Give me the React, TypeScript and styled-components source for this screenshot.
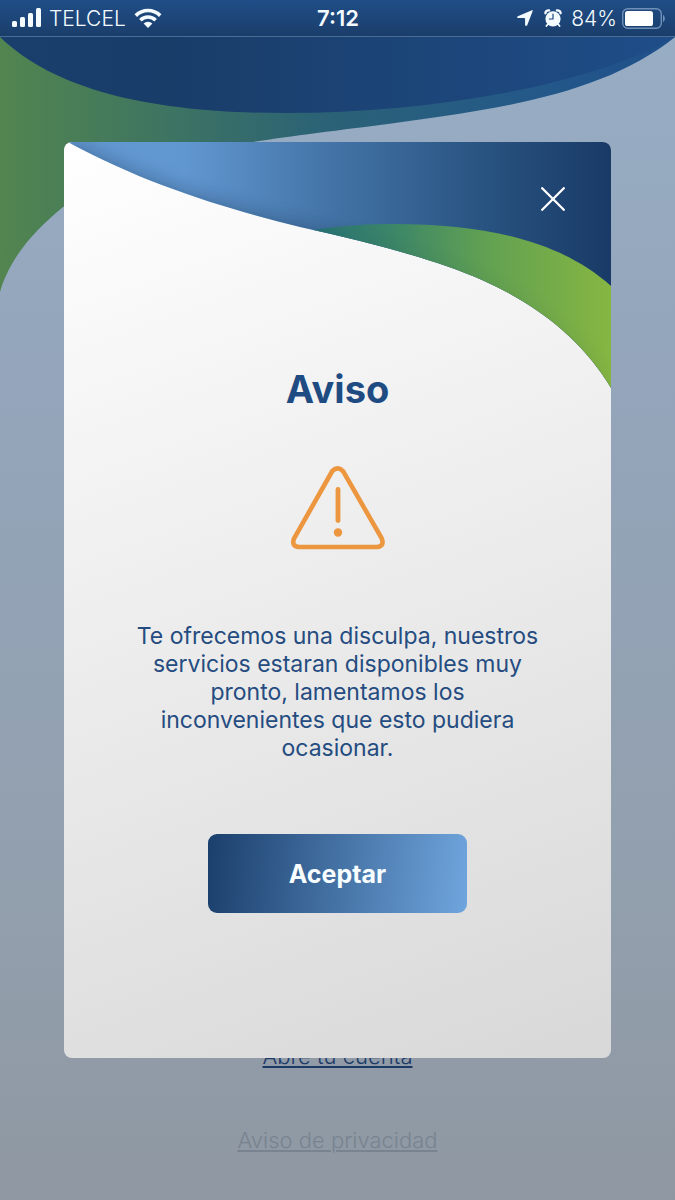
import React from "react";
import styled, { createGlobalStyle } from "styled-components";

const GlobalStyle = createGlobalStyle`
  *, *::before, *::after { box-sizing: border-box; }
  body { margin: 0; font-family: Inter, "Liberation Sans", sans-serif; }
`;

const Screen = styled.div`
  position: relative;
  display: flex;
  flex-direction: column;
  min-height: 100vh;
  background: linear-gradient(180deg, #98aec5 0%, #94a6bc 28%, #929fad 75%, #8f98a2 100%);
`;

const StatusBar = styled.header`
  display: grid;
  grid-template-columns: 1fr auto 1fr;
  align-items: center;
  height: 37px;
  padding: 0 10px 0 11px;
  color: #f4fbff;
  font-size: 22px;
  line-height: 36px;
  background: linear-gradient(180deg, #204d87 0%, #1a3e6b 100%);
  border-bottom: 1px solid #4a6d96;
`;

const StatusGroup = styled.div<{ $end?: boolean }>`
  display: flex;
  align-items: center;
  justify-content: ${(p) => (p.$end ? "flex-end" : "flex-start")};
  gap: ${(p) => (p.$end ? "5px" : "8px")};
`;

const StatusIcons = styled.div`
  display: flex;
  align-items: center;
  gap: 11px;
  padding-right: 4px;
`;

const StatusText = styled.span`
  padding-top: 2px;
  font-size: 21px;
  font-weight: 350;
  line-height: 34px;
`;

const Time = styled.time`
  font-weight: 600;
`;

const HeroWave = styled.svg`
  display: block;
  width: 100%;
  height: 255px;
`;

const FooterLinks = styled.nav`
  display: flex;
  flex-direction: column;
  align-items: center;
  gap: 56px;
  margin-top: auto;
  padding-bottom: 46px;
`;

const FooterLink = styled.a<{ $muted?: boolean }>`
  color: ${(p) => (p.$muted ? "#78838f" : "#1c3a68")};
  font-size: 22px;
  font-weight: 300;
  line-height: 28px;
  text-decoration: underline;
  text-decoration-thickness: 2px;
  text-underline-offset: 2px;
`;

const Overlay = styled.div`
  position: absolute;
  inset: 0;
  display: flex;
  align-items: center;
  justify-content: center;
  padding: 0 64px;
`;

const Dialog = styled.section`
  position: relative;
  display: flex;
  flex-direction: column;
  align-items: center;
  width: 100%;
  padding-bottom: 145px;
  overflow: hidden;
  border-radius: 8px;
  background: linear-gradient(160deg, #ffffff 0%, #d8d8d8 100%);
`;

const DialogWave = styled.svg`
  display: block;
  width: 100%;
  height: 247px;
  margin-bottom: -24px;
`;

const CloseButton = styled.button`
  position: absolute;
  top: 35px;
  right: 36px;
  display: grid;
  place-items: center;
  width: 44px;
  height: 44px;
  padding: 0;
  border: 0;
  background: none;
  cursor: pointer;
`;

const Title = styled.h1`
  margin: 0 0 52px;
  color: #1f4b83;
  font-size: 38px;
  font-weight: 700;
  line-height: 48px;
`;

const Message = styled.p`
  margin: 72px 0;
  padding: 0 64px;
  color: #254c80;
  font-size: 23px;
  line-height: 28px;
  text-align: center;
`;

const AcceptButton = styled.button`
  width: 259px;
  height: 79px;
  border: 0;
  border-radius: 9px;
  color: #f8fdff;
  font-family: inherit;
  font-size: 25px;
  font-weight: 650;
  background: linear-gradient(95deg, #1b3f6c 0%, #6fa5dd 100%);
  cursor: pointer;
`;

const SignalIcon = () => (
  <svg width="30" height="20" viewBox="0 0 30 20" fill="currentColor" aria-hidden="true">
    <rect x="1" y="13" width="5" height="6" rx="1.5" />
    <rect x="9" y="9" width="5" height="10" rx="1.5" />
    <rect x="17" y="5" width="5" height="14" rx="1.5" />
    <rect x="25" y="0" width="5" height="19" rx="1.5" />
  </svg>
);

const WifiIcon = () => (
  <svg width="28" height="20" viewBox="0 0 28 20" aria-hidden="true">
    <g fill="none" stroke="currentColor" strokeWidth="3.6">
      <path d="M1.8 7.6 A17.3 17.3 0 0 1 26.2 7.6" />
      <path d="M6.4 12.2 A10.8 10.8 0 0 1 21.6 12.2" />
    </g>
    <path d="M14 20 L9.6 15.6 A6.2 6.2 0 0 1 18.4 15.6 Z" fill="currentColor" />
  </svg>
);

const LocationIcon = () => (
  <svg width="16" height="16" viewBox="0 0 16 16" fill="currentColor" aria-hidden="true">
    <path d="M15 0.2 C15.7 0 16 0.4 15.7 1.1 L10.2 15.2 C9.8 16.2 8.1 16 8.1 15 V9 C8.1 8.4 7.8 8.1 7.2 8.1 H1 C0 8.1 -0.1 6.6 0.8 6.2 Z" />
  </svg>
);

const AlarmIcon = () => (
  <svg width="18" height="18" viewBox="0 0 18 18" aria-hidden="true">
    <circle cx="9" cy="9.8" r="7.6" fill="currentColor" />
    <g fill="none" stroke="currentColor" strokeLinecap="round">
      <path d="M1.4 4.2 A3 3 0 0 1 5 1.4" strokeWidth="2.4" />
      <path d="M16.6 4.2 A3 3 0 0 0 13 1.4" strokeWidth="2.4" />
      <path d="M4 15 L2.4 17 M14 15 L15.6 17" strokeWidth="1.8" />
    </g>
    <path d="M9 5.2 V10 H5.4" fill="none" stroke="#1d457a" strokeWidth="1.2" strokeLinecap="round" />
  </svg>
);

const BatteryIcon = () => (
  <svg width="43" height="21" viewBox="0 0 43 21" aria-hidden="true">
    <rect x="0.7" y="0.7" width="38.6" height="19.6" rx="5" fill="none" stroke="#7090b8" strokeWidth="1.4" />
    <rect x="3" y="3" width="28" height="15" rx="2.6" fill="#ffffff" />
    <path d="M41 7 C43.4 8 43.4 13 41 14 Z" fill="#7090b8" />
  </svg>
);

const WarningIcon = () => (
  <svg width="96" height="85" viewBox="0 0 96 85" fill="none" stroke="#ec963f" aria-hidden="true">
    <path
      d="M42.3 6 Q48 0.6 53.2 6.4 L91.6 73.2 Q94.8 81.2 87 82 H9 Q1.2 81.2 4 73.6 Z"
      strokeWidth="4.6"
      strokeLinejoin="round"
    />
    <path d="M48 24.5 V55.5" strokeWidth="4.8" strokeLinecap="round" />
    <circle cx="48" cy="67.5" r="4.2" fill="#ec963f" stroke="none" />
  </svg>
);

const CloseIcon = () => (
  <svg width="24" height="24" viewBox="0 0 24 24" aria-hidden="true">
    <path d="M1.2 1.2 L22.8 22.8 M22.8 1.2 L1.2 22.8" stroke="#ffffff" strokeWidth="2.3" strokeLinecap="round" />
  </svg>
);

const edge = "C80 42 160 66 236 85 C300 99 371 117 418 138 C475 163 520 200 547 246";

export default function App() {
  return (
    <>
      <GlobalStyle />
      <Screen>
        <StatusBar>
          <StatusGroup>
            <SignalIcon />
            <StatusText>TELCEL</StatusText>
            <WifiIcon />
          </StatusGroup>
          <Time>7:12</Time>
          <StatusGroup $end>
            <StatusIcons>
              <LocationIcon />
              <AlarmIcon />
            </StatusIcons>
            <StatusText>84%</StatusText>
            <BatteryIcon />
          </StatusGroup>
        </StatusBar>

        <HeroWave viewBox="0 0 675 255" preserveAspectRatio="none" aria-hidden="true">
          <defs>
            <linearGradient id="heroGreen">
              <stop offset="0" stopColor="#52854f" />
              <stop offset="0.22" stopColor="#40765f" />
              <stop offset="0.48" stopColor="#2b6276" />
              <stop offset="0.8" stopColor="#235889" />
              <stop offset="1" stopColor="#1f4f8a" />
            </linearGradient>
            <linearGradient id="heroBlue">
              <stop offset="0" stopColor="#193f6c" />
              <stop offset="0.25" stopColor="#193d69" />
              <stop offset="1" stopColor="#1f4d88" />
            </linearGradient>
          </defs>
          <path
            d="M675 0 C610 52 518 70 402 85 C335 94 290 99 253 105 C160 120 100 145 63 170 C35 193 10 220 0 255 V0 Z"
            fill="url(#heroGreen)"
          />
          <path d="M0 0 C60 58 165 76 285 76 C430 76 590 49 675 0 Z" fill="url(#heroBlue)" />
        </HeroWave>

        <FooterLinks>
          <FooterLink href="#cuenta">Abre tu cuenta</FooterLink>
          <FooterLink href="#privacidad" $muted>
            Aviso de privacidad
          </FooterLink>
        </FooterLinks>

        <Overlay>
          <Dialog role="dialog" aria-modal="true" aria-labelledby="aviso-title">
            <DialogWave viewBox="0 0 547 247" preserveAspectRatio="none" aria-hidden="true">
              <defs>
                <linearGradient id="cardBlue">
                  <stop offset="0" stopColor="#6399d2" />
                  <stop offset="0.22" stopColor="#6197d0" />
                  <stop offset="0.5" stopColor="#4272a5" />
                  <stop offset="0.75" stopColor="#2a5583" />
                  <stop offset="1" stopColor="#193a66" />
                </linearGradient>
                <linearGradient id="cardGreen" gradientUnits="userSpaceOnUse" x1="236" y1="0" x2="547" y2="0">
                  <stop offset="0" stopColor="#256f78" />
                  <stop offset="0.3" stopColor="#3c8668" />
                  <stop offset="0.6" stopColor="#62a152" />
                  <stop offset="1" stopColor="#86b642" />
                </linearGradient>
                <clipPath id="cardTop">
                  <path d={`M0 -2 ${edge} V-2 Z`} />
                </clipPath>
                <filter id="soften" x="-10%" y="-10%" width="120%" height="120%">
                  <feGaussianBlur stdDeviation="10" />
                </filter>
              </defs>
              <g clipPath="url(#cardTop)">
                <rect width="547" height="247" fill="url(#cardBlue)" />
                <path
                  d={`M0 -2 ${edge} V280 H0 Z`}
                  fill="#1b3050"
                  opacity="0.36"
                  filter="url(#soften)"
                />
                <path
                  d="M250 88 C280 83 305 82 330 82 C430 82 500 102 547 144 V247 H250 Z"
                  fill="url(#cardGreen)"
                />
                <path
                  d={`M0 -2 ${edge} V280 H0 Z`}
                  fill="#1b3050"
                  opacity="0.08"
                  filter="url(#soften)"
                />
              </g>
            </DialogWave>
            <CloseButton type="button" aria-label="Cerrar">
              <CloseIcon />
            </CloseButton>
            <Title id="aviso-title">Aviso</Title>
            <WarningIcon />
            <Message>
              Te ofrecemos una disculpa, nuestros servicios estaran disponibles muy pronto, lamentamos los
              inconvenientes que esto pudiera ocasionar.
            </Message>
            <AcceptButton type="button">Aceptar</AcceptButton>
          </Dialog>
        </Overlay>
      </Screen>
    </>
  );
}
